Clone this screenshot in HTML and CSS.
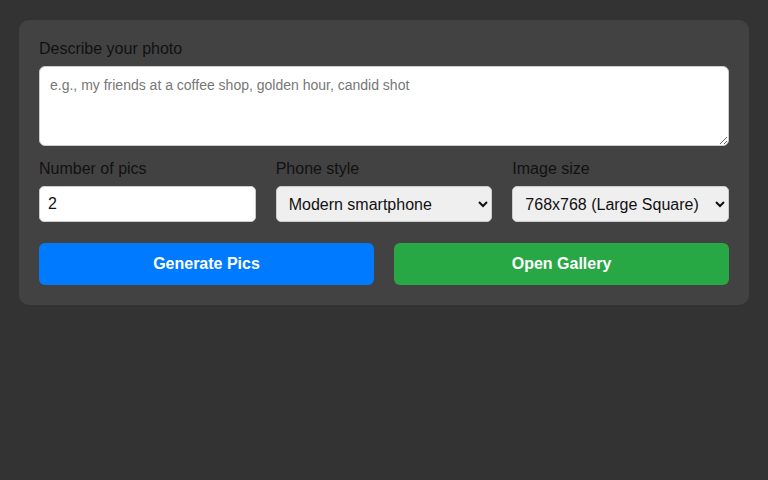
FILE: index.html
```html
<!DOCTYPE html>
<html lang="en">
<head>
    <meta charset="UTF-8">
    <meta name="viewport" content="width=device-width, initial-scale=1.0">
    <title>Photo Generator</title>
    <link rel="stylesheet" href="styles.css">
</head>
<body>
    <div class="container">
        <div class="form-group">
            <label for="prompt">Describe your photo</label>
            <textarea id="prompt" placeholder="e.g., my friends at a coffee shop, golden hour, candid shot"></textarea>
        </div>
        <div class="options">
            <div class="option">
                <label for="count">Number of pics</label>
                <input type="number" id="count" value="2" min="1" max="8">
            </div>
            <div class="option">
                <label for="phone">Phone style</label>
                <select id="phone">
                    <option>Modern smartphone</option>
                    <option>Old flip phone</option>
                    <option>Disposable camera</option>
                </select>
            </div>
            <div class="option">
                <label for="size">Image size</label>
                <select id="size">
                    <option>768x768 (Large Square)</option>
                    <option>512x512 (Square)</option>
                    <option>512x768 (Portrait)</option>
                </select>
            </div>
        </div>
        <div class="buttons">
            <button class="btn btn-generate">Generate Pics</button>
            <button class="btn btn-gallery">Open Gallery</button>
        </div>
    </div>
</body>
</html>
```
FILE: styles.css
```css
body {
    background-color: #333;
    margin: 0;
    padding: 20px 19px;
    font-family: "Liberation Sans", Arial, sans-serif;
    font-size: 16px;
}
.container {
    background-color: #424242;
    border-radius: 10px;
    padding: 20px;
}
label {
    display: block;
    color: #111;
    margin-bottom: 8px;
}
.form-group {
    margin-bottom: 14px;
}
textarea {
    display: block;
    box-sizing: border-box;
    width: 100%;
    height: 80px;
    padding: 10px;
    border: 1px solid #ccc;
    border-radius: 6px;
    font-family: inherit;
    font-size: 14px;
    background: #fff;
}
textarea::placeholder {
    color: #777;
}
.options {
    display: grid;
    grid-template-columns: 1fr 1fr 1fr;
    gap: 20px;
    margin-bottom: 21px;
}
.option input,
.option select {
    display: block;
    box-sizing: border-box;
    width: 100%;
    height: 36px;
    padding: 6px 8px;
    border: 1px solid #ccc;
    border-radius: 5px;
    font-family: inherit;
    font-size: 16px;
    color: #111;
}
.option input {
    background: #fff;
}
.option select {
    background-color: #efefef;
}
.buttons {
    display: flex;
    gap: 20px;
}
.btn {
    flex: 1;
    height: 42px;
    border: none;
    border-radius: 6px;
    color: #fff;
    font-family: inherit;
    font-size: 16px;
    font-weight: bold;
    cursor: pointer;
}
.btn-generate {
    background-color: #007bff;
}
.btn-gallery {
    background-color: #28a745;
}
```
